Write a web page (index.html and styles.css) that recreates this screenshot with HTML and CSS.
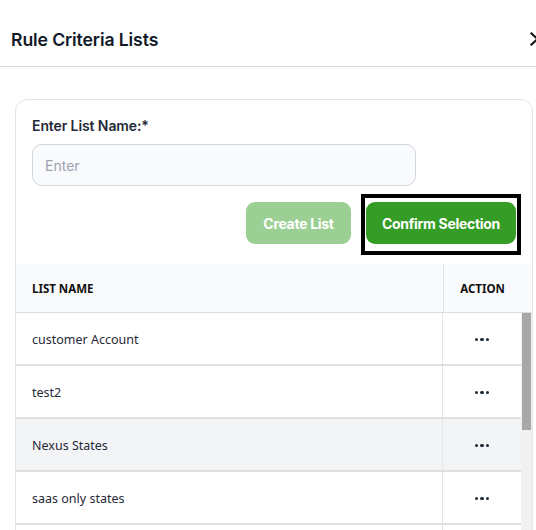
FILE: index.html
```html
<!DOCTYPE html>
<html>
<head>
<meta charset="utf-8">
<link rel="stylesheet" href="styles.css">
</head>
<body>
<div class="panel">
  <header class="head">
    <h2 class="title">Rule Criteria Lists</h2>
    <svg class="close" width="12" height="14" viewBox="0 0 12 14"><path d="M2.5 1.5 L8.5 7 L2.5 12.5" fill="none" stroke="#111" stroke-width="2.2" stroke-linecap="square"/></svg>
  </header>
  <div class="content">
    <div class="card">
      <label class="label">Enter List Name:*</label>
      <input class="input" type="text" placeholder="Enter">
      <div class="actions">
        <button class="btn btn-disabled">Create List</button>
        <div class="highlight"><button class="btn">Confirm Selection</button></div>
      </div>
      <div class="table">
        <div class="thead">
          <div class="th th-name">LIST NAME</div>
          <div class="th th-action">ACTION</div>
        </div>
        <div class="tbody">
          <div class="rows">
            <div class="row"><div class="td td-name">customer Account</div><div class="td td-action"><span class="dots"><i></i><i></i><i></i></span></div></div>
            <div class="row"><div class="td td-name">test2</div><div class="td td-action"><span class="dots"><i></i><i></i><i></i></span></div></div>
            <div class="row row-hover"><div class="td td-name">Nexus States</div><div class="td td-action"><span class="dots"><i></i><i></i><i></i></span></div></div>
            <div class="row"><div class="td td-name">saas only states</div><div class="td td-action"><span class="dots"><i></i><i></i><i></i></span></div></div>
            <div class="row"><div class="td td-name"></div><div class="td td-action"></div></div>
          </div>
          <div class="scrollbar"><div class="thumb"></div></div>
        </div>
      </div>
    </div>
  </div>
</div>
</body>
</html>
```
FILE: styles.css
```css
html, body {
  margin: 0;
  padding: 0;
  background: #fff;
  overflow: hidden;
  height: 530px;
}
.panel {
  width: 536px;
  font-family: Inter, "Noto Sans", sans-serif;
  color: #111827;
}
.head {
  border-bottom: 1px solid #d5d9de;
  display: flex;
  align-items: center;
  justify-content: space-between;
  padding-left: 11px;
  box-sizing: border-box;
  height: 67px;
}
.title {
  margin: 0;
  font-size: 17.6px;
  font-weight: 600;
  color: #111827;
  letter-spacing: -0.1px;
  position: relative;
  top: 6px;
}
.close {
  margin-right: -5px;
  position: relative;
  top: 6px;
}
.content {
  padding: 32px 3px 0 15px;
}
.card {
  border: 1px solid #e3e5e8;
  border-radius: 12px;
  padding: 16px 16px 0 16px;
  height: 500px;
  overflow: hidden;
}
.label {
  display: block;
  font-size: 14px;
  line-height: 20px;
  font-weight: 600;
  color: #1f2937;
  letter-spacing: -0.1px;
}
.input {
  display: block;
  margin-top: 8px;
  width: 384px;
  height: 42px;
  box-sizing: border-box;
  border: 1px solid #d1d5db;
  border-radius: 10px;
  background: #f9fafb;
  padding: 0 12px;
  font-family: Inter, sans-serif;
  font-size: 14px;
  outline: none;
}
.input::placeholder {
  color: #9ca3af;
}
.actions {
  display: flex;
  justify-content: flex-end;
  align-items: flex-start;
  gap: 10px;
  margin-top: 8px;
  margin-right: -5px;
}
.btn {
  height: 42px;
  border: none;
  border-radius: 9px;
  background: #359c26;
  color: #fff;
  font-family: Inter, sans-serif;
  font-size: 14px;
  font-weight: 700;
  letter-spacing: -0.3px;
  padding: 0 8px;
  white-space: nowrap;
}
.btn-disabled {
  margin-top: 8px;
  background: #9bcf93;
  width: 105px;
}
.highlight {
  border: 4px solid #000;
  padding: 4px 1px 7px 1px;
  line-height: 0;
}
.highlight .btn {
  width: 150px;
}
.table {
  margin: 9px -16px 0 -16px;
  font-family: "Noto Sans", sans-serif;
}
.thead {
  display: flex;
  height: 48px;
  background: #f9fafb;
  border-bottom: 1px solid #dcdcdc;
}
.th {
  font-size: 11.5px;
  font-weight: 700;
  color: #111;
  display: flex;
  align-items: center;
}
.th-name {
  flex: 1;
  padding-left: 16px;
}
.th-action {
  width: 89px;
  border-left: 1px solid #e3e5e8;
  justify-content: center;
  padding-right: 11px;
  box-sizing: border-box;
}
.tbody {
  display: flex;
}
.rows {
  flex: 1;
}
.row {
  display: flex;
  height: 51px;
  border-bottom: 2px solid #e0e0e0;
}
.row-hover {
  background: #f3f4f6;
}
.td {
  display: flex;
  align-items: center;
  font-size: 12.5px;
  color: #1f2937;
  padding-top: 2px;
}
.td-name {
  flex: 1;
  padding-left: 16px;
}
.td-action {
  width: 78px;
  border-left: 1px solid #e3e5e8;
  justify-content: center;
}
.dots {
  display: flex;
  gap: 2px;
}
.dots i {
  width: 3.4px;
  height: 3.4px;
  border-radius: 50%;
  background: #1f2937;
}
.scrollbar {
  width: 11px;
  background: #f1f1f1;
  padding-left: 1px;
  box-sizing: border-box;
}
.thumb {
  width: 9px;
  height: 117px;
  background: #a8a8a8;
}
```
